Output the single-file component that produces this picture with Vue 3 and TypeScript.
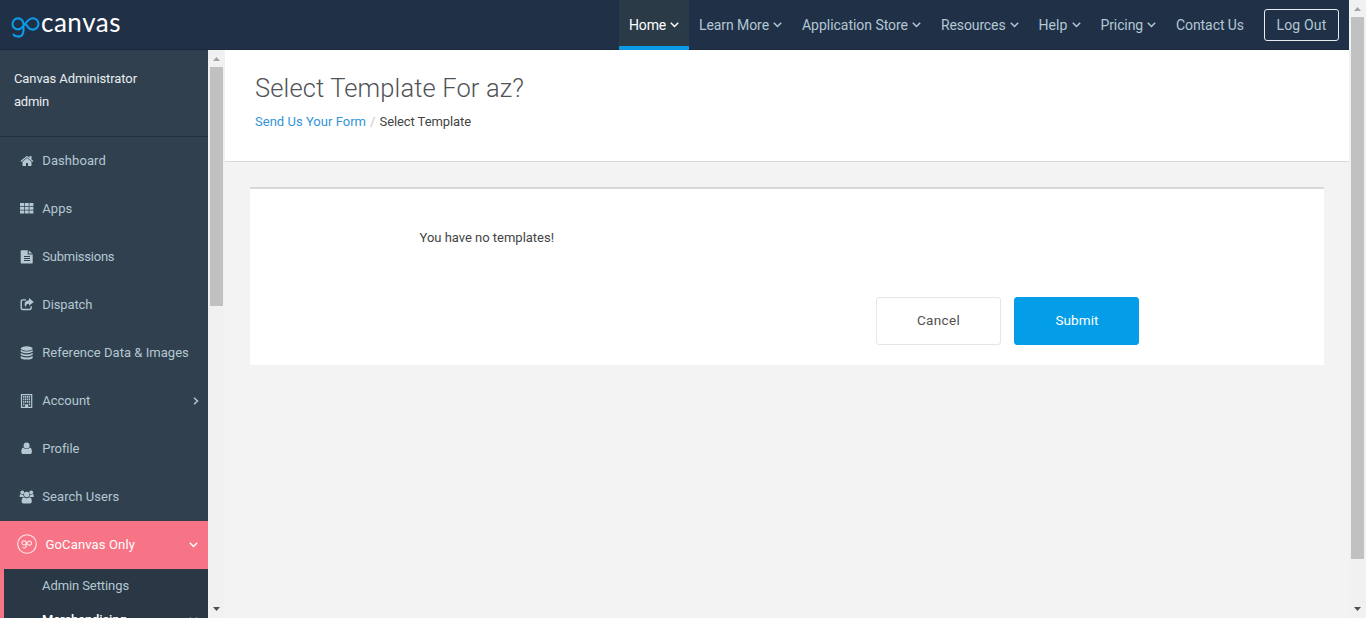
<script setup lang="ts">
import type { Directive } from 'vue'

interface NavLink { label: string; width: number; menu: boolean; active?: boolean }
interface SideLink { label: string; width: number; icon: string; more?: boolean }

// Tracks a label so that it occupies the given width in pixels.
const vFit: Directive<HTMLElement, number> = {
  mounted(el, { value }) {
    const natural = el.getBoundingClientRect().width
    const count = (el.textContent ?? '').length
    el.style.letterSpacing = `${(value - natural) / count}px`
  },
}

const nav: NavLink[] = [
  { label: 'Home', width: 37, menu: true, active: true },
  { label: 'Learn More', width: 70, menu: true },
  { label: 'Application Store', width: 106, menu: true },
  { label: 'Resources', width: 64.5, menu: true },
  { label: 'Help', width: 29, menu: true },
  { label: 'Pricing', width: 42.5, menu: true },
  { label: 'Contact Us', width: 68, menu: false },
]

const links: SideLink[] = [
  { label: 'Dashboard', width: 63.5, icon: 'home' },
  { label: 'Apps', width: 30, icon: 'grid' },
  { label: 'Submissions', width: 72, icon: 'file' },
  { label: 'Dispatch', width: 50, icon: 'share' },
  { label: 'Reference Data & Images', width: 146.5, icon: 'database' },
  { label: 'Account', width: 48, icon: 'building', more: true },
  { label: 'Profile', width: 36.5, icon: 'user' },
  { label: 'Search Users', width: 77, icon: 'users' },
]
</script>

<template>
  <div class="window">
    <div class="page">
      <header class="topbar">
        <a class="logo">
          <svg class="mark" width="30" height="26" viewBox="0 0 30 26">
            <path d="M13.500 18V10.900A5.500 5.500 0 1 0 8 16.400C14 16.400 16 5.200 22.800 5.200A5.700 5.700 0 1 1 17.800 13.800L15.800 11.200M13.500 17C13.500 21.500 11.500 23.600 8.200 23.600C6 23.600 4.300 23 3.500 21.600" />
          </svg>
          <span v-fit="80" class="word">canvas</span>
        </a>
        <nav class="menu">
          <a v-for="n in nav" :key="n.label" class="menu-item" :class="{ active: n.active }">
            <span v-fit="n.width" class="label">{{ n.label }}</span>
            <svg v-if="n.menu" class="caret" width="9" height="6" viewBox="0 0 9 6"><path d="M.8.8 4.500 4.500 8.200.8" /></svg>
          </a>
          <a class="logout"><span v-fit="50" class="label">Log Out</span></a>
        </nav>
      </header>

      <div class="body">
        <aside class="sidebar">
          <div class="account">
            <div><span v-fit="123" class="label">Canvas Administrator</span></div>
            <div><span v-fit="35" class="label">admin</span></div>
          </div>
          <a v-for="l in links" :key="l.label" class="side-item">
            <svg v-if="l.icon === 'home'" class="icon" viewBox="0 0 1792 1792"><path d="M1472 992v480q0 26-19 45t-45 19h-384v-384h-256v384h-384q-26 0-45-19t-19-45v-480q0-1 .5-3t.5-3l575-474 575 474q1 2 1 6zm223-69l-62 74q-8 9-21 11h-3q-13 0-21-7l-692-577-692 577q-12 8-24 7-13-2-21-11l-62-74q-8-10-7-23.500t11-21.500l719-599q32-26 76-26t76 26l244 204v-195q0-14 9-23t23-9h192q14 0 23 9t9 23v408l219 182q10 8 11 21.500t-7 23.500z" /></svg>
            <svg v-else-if="l.icon === 'grid'" class="icon" viewBox="0 0 14 14"><path d="M0 1h4v3H0zM4.700 1h4v3h-4zM9.400 1h4v3h-4zM0 4.700h4v3H0zM4.700 4.700h4v3h-4zM9.400 4.700h4v3h-4zM0 8.400h4v3H0zM4.700 8.400h4v3h-4zM9.400 8.400h4v3h-4z" /></svg>
            <svg v-else-if="l.icon === 'file'" class="icon" viewBox="0 0 14 14"><path fill-rule="evenodd" d="M1.400.2H7.700v4.300h5v8.200q0 .7-.7.7H1.400q-.7 0-.7-.7V.9q0-.7.7-.7zM8.700.4l3.800 3.100H8.700zM4 6v1h6V6zM4 8v1h6V8zM4 10v1h6v-1z" /></svg>
            <svg v-else-if="l.icon === 'share'" class="icon" viewBox="0 0 14 14"><path d="M6 1.900H3Q1.200 1.900 1.200 3.700v6Q1.200 11.500 3 11.500h6.500q1.700 0 1.700-1.800V8.200" fill="none" stroke="currentColor" stroke-width="1.400" /><path d="M9 0 13.800 4 9 7.800V5.700Q5.800 5.300 5.800 9.500 2.300 3 9 2.300z" /></svg>
            <svg v-else-if="l.icon === 'database'" class="icon" viewBox="0 0 14 14"><ellipse cx="6.700" cy="2.500" rx="6" ry="2.200" /><path d="M.7 4Q6.700 7 12.700 4v1.700Q6.700 9 .7 5.700zM.7 7Q6.700 10 12.700 7v1.700Q6.700 12 .7 8.700zM.7 10Q6.700 13 12.700 10v1.500q0 2-6 2t-6-2z" /></svg>
            <svg v-else-if="l.icon === 'building'" class="icon" viewBox="0 0 14 14"><path d="M1.500.6h10.200v12.700H1.500z" fill="none" stroke="currentColor" stroke-width="1.200" /><path d="M3.100 2h1.300v1.700H3.100zM5 2h1.300v1.700H5zM6.900 2h1.300v1.700H6.900zM8.800 2h1.300v1.700H8.800zM3.100 4.500h1.300v1.700H3.100zM5 4.500h1.300v1.700H5zM6.900 4.500h1.300v1.700H6.900zM8.800 4.500h1.300v1.700H8.800zM3.100 7h1.300v1.700H3.100zM5 7h1.300v1.700H5zM6.900 7h1.300v1.700H6.900zM8.800 7h1.300v1.700H8.800zM3.100 9.500h1.300v1.700H3.100zM5.100 10.300h3v3h-3zM8.800 9.500h1.300v1.700H8.800z" /></svg>
            <svg v-else-if="l.icon === 'user'" class="icon" viewBox="0 0 14 14"><circle cx="6.600" cy="3.600" r="3" /><path d="M3.100 5.600Q6.600 8.600 10.100 5.600q1.800.8 1.800 4.500 0 2-1.600 2H2.900q-1.600 0-1.600-2Q1.300 6.400 3.100 5.600z" /></svg>
            <svg v-else class="icon" viewBox="0 0 14 14"><circle cx="2.300" cy="2.300" r="1.900" /><circle cx="11.200" cy="2.300" r="1.900" /><circle cx="6.700" cy="4.500" r="2.700" /><path d="M-.3 7V5.600Q-.3 4 .7 4q1.500 1 2.700.5Q3.300 6 4 7zM13.700 7V5.600Q13.700 4 12.700 4q-1.500 1-2.700.5.100 1.500-.6 2.500zM1.600 11.500q0-4.200 2.500-4.200 2.600 1.900 5.200 0 2.500 0 2.500 4.200 0 2-1.800 2H3.400q-1.800 0-1.800-2z" /></svg>
            <span v-fit="l.width" class="label">{{ l.label }}</span>
            <svg v-if="l.more" class="chev" width="6" height="8" viewBox="0 0 6 8"><path d="M1 .8 4.500 4 1 7.200" /></svg>
          </a>
          <a class="side-item only">
            <svg class="badge" width="20" height="20" viewBox="0 0 20 20">
              <circle cx="10" cy="10" r="9.300" />
              <path d="M9.200 12V9A2.100 2.100 0 1 0 8.700 10.200C10 9 10.600 7 12.800 7A2.100 2.100 0 1 1 11 10.600L9.700 9M9.200 11.500Q9.400 14 7.200 14 6 14 5.500 13.200" />
            </svg>
            <span v-fit="89.500" class="label">GoCanvas Only</span>
            <svg class="caret" width="9" height="6" viewBox="0 0 9 6"><path d="M.8.8 4.500 4.500 8.200.8" /></svg>
          </a>
          <div class="sub">
            <a class="sub-item"><span v-fit="87" class="label">Admin Settings</span></a>
            <a class="sub-item strong"><span v-fit="84.500" class="label">Merchandising</span>
              <svg class="caret" width="9" height="6" viewBox="0 0 9 6"><path d="M.8.8 4.500 4.500 8.200.8" /></svg>
            </a>
          </div>
        </aside>
        <div class="scroll side-scroll">
          <i class="arrow up"></i><div class="thumb"></div><i class="arrow down"></i>
        </div>
        <main class="main">
          <section class="heading">
            <h1><span v-fit="269" class="label">Select Template For az?</span></h1>
            <div class="crumbs">
              <a v-fit="111" class="label">Send Us Your Form</a><span class="slash">/</span><span v-fit="91.500" class="label">Select Template</span>
            </div>
          </section>
          <section class="panel">
            <p><span v-fit="134.500" class="label">You have no templates!</span></p>
            <div class="actions">
              <button class="btn"><span v-fit="43" class="label">Cancel</span></button>
              <button class="btn primary"><span v-fit="43" class="label">Submit</span></button>
            </div>
          </section>
        </main>
      </div>
    </div>
    <div class="scroll page-scroll">
      <i class="arrow up"></i><div class="thumb"></div><i class="arrow down"></i>
    </div>
  </div>
</template>

<style>
body { margin: 0; overflow: hidden; }
</style>

<style scoped>
* { box-sizing: border-box; }
.window { display: flex; width: 1366px; height: 618px; overflow: hidden; background: #f3f3f3; font: 13px/20px Roboto, "Liberation Sans", sans-serif; color: #444; }
.page { width: 1349px; height: 618px; display: flex; flex-direction: column; }
.label { display: inline-block; white-space: nowrap; }

.topbar { height: 50px; flex: none; display: flex; justify-content: space-between; background: #203047; border-bottom: 1px solid #1d2a3e; }
.logo { display: flex; padding: 13px 0 0 10px; }
.mark { flex: none; fill: none; stroke: #0c9be8; stroke-width: 2.100; stroke-linecap: round; }
.word { margin: -1px 0 0 1px; font: 400 26px/20px Lato, Roboto, sans-serif; color: #fff; }
.menu { display: flex; font-size: 14px; color: #b2c8d3; }
.menu-item { display: flex; align-items: center; height: 50px; padding: 0 10px 1px; }
.menu-item.active { background: #2a3a47; border-bottom: 4px solid #0b9be6; color: #fff; padding-top: 3px; padding-bottom: 0; }
.caret, .chev { flex: none; fill: none; stroke: currentColor; stroke-width: 1.500; }
.menu-item .caret { margin-left: 4px; }
.logout { width: 75px; height: 32px; margin: 9px 10px 0; display: flex; align-items: center; justify-content: center; border: 1px solid #e8ecef; border-radius: 3px; }

.body { display: flex; height: 568px; }
.sidebar { width: 208px; overflow: hidden; background: #30404f; color: #b4c8d2; flex: none; }
.account { height: 87px; padding: 17px 14px 0; border-bottom: 1px solid #212f3f; color: #e9eef1; line-height: 23px; }
.side-item { display: flex; align-items: center; height: 48px; padding: 0 9.500px 0 20px; }
.icon { width: 14px; height: 14px; margin: -1px 8.300px 0 0; flex: none; fill: currentColor; overflow: visible; }
.chev { margin-left: auto; }
.only { background: #f77486; color: #fff; padding: 0 10px 0 17px; }
.only .caret { margin-left: auto; }
.badge { flex: none; margin: -2px 8.500px 0 0; fill: none; stroke: #ffe8eb; stroke-width: 1.100; }
.sub { height: 80px; background: #2a3845; border-left: 4px solid #f77486; }
.sub-item { display: flex; align-items: center; height: 34px; padding: 0 10px 0 38px; }
.strong { color: #fff; font-weight: 500; }
.strong .caret { margin-left: auto; color: #b4c8d2; }

.scroll { width: 17px; flex: none; display: flex; flex-direction: column; align-items: center; background: #f1f1f1; }
.thumb { width: 13px; background: #c1c1c1; }
.arrow { width: 7px; height: 4px; background: #505050; }
.up { margin: 7px 0 6px; background: #a3a3a3; clip-path: polygon(50% 0, 100% 100%, 0 100%); }
.down { margin: auto 0 7px; clip-path: polygon(0 0, 100% 0, 50% 100%); }
.side-scroll .thumb { height: 239px; }
.page-scroll .thumb { height: 542px; }

.main { flex: 1; background: #f3f3f3; }
.heading { height: 112px; padding: 22px 30px 0; background: #fff; border-bottom: 1px solid #d8dada; }
h1 { margin: 0; font-size: 25.500px; font-weight: 300; line-height: 32px; color: #505356; }
.crumbs { margin-top: 8px; display: flex; }
.crumbs a { color: #3394d8; }
.slash { width: 13.500px; text-align: center; color: #c8c8c8; }
.panel { margin: 25px 25px 0; height: 178px; background: #fff; border-top: 2px solid #d5d9dc; padding: 39px 185px 0 169px; }
.panel p { margin: 0; padding-left: .5px; }
.actions { margin-top: 49px; display: flex; justify-content: flex-end; gap: 13px; }
.btn { width: 125px; height: 48px; padding: 0 0 2px; border: 1px solid #e3e6ea; border-radius: 3px; background: #fff; color: #505050; font: inherit; font-size: 13.500px; }
.primary { background: #049ee8; border-color: #049ee8; color: #fff; padding-left: 1px; }
</style>
